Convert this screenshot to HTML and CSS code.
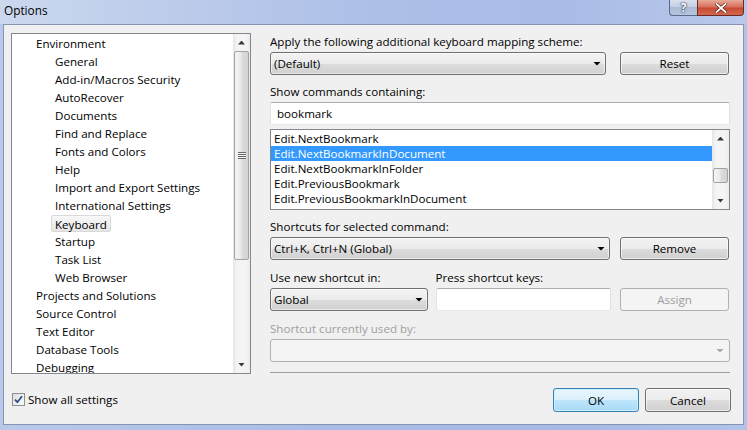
FILE: index.html
```html
<!DOCTYPE html>
<html>
<head>
<meta charset="utf-8">
<title>Options</title>
<link rel="stylesheet" href="styles.css">
</head>
<body>
<div class="window">
  <div class="titlebar">
    <span class="title">Options</span>
    <div class="caption-btns">
      <div class="cbtn help">?</div>
      <div class="cbtn close">
        <svg width="12" height="10" viewBox="0 0 12 10"><path d="M1.5 1 L10.5 9 M10.5 1 L1.5 9" stroke="#5a1a10" stroke-width="3.2" stroke-linecap="square"/><path d="M1.5 1 L10.5 9 M10.5 1 L1.5 9" stroke="#ffffff" stroke-width="1.8" stroke-linecap="square"/></svg>
      </div>
    </div>
  </div>
  <div class="client">
    <div class="left">
      <div class="tree">
        <ul class="tree-items">
          <li>Environment</li>
          <li class="child">General</li>
          <li class="child">Add-in/Macros Security</li>
          <li class="child">AutoRecover</li>
          <li class="child">Documents</li>
          <li class="child">Find and Replace</li>
          <li class="child">Fonts and Colors</li>
          <li class="child">Help</li>
          <li class="child">Import and Export Settings</li>
          <li class="child">International Settings</li>
          <li class="child sel-row"><span class="tree-sel">Keyboard</span></li>
          <li class="child">Startup</li>
          <li class="child">Task List</li>
          <li class="child">Web Browser</li>
          <li>Projects and Solutions</li>
          <li>Source Control</li>
          <li>Text Editor</li>
          <li>Database Tools</li>
          <li>Debugging</li>
        </ul>
        <div class="vscroll">
          <div class="sb-btn"><span class="arr-up"></span></div>
          <div class="sb-thumb tree-thumb"><span class="grip"></span></div>
          <div class="sb-track"></div>
          <div class="sb-btn"><span class="arr-down"></span></div>
        </div>
      </div>
      <div class="check">
        <span class="checkbox">
          <svg width="9" height="9" viewBox="0 0 9 9"><path d="M1 4.6 L3.4 7.2 L8 1.2" fill="none" stroke="#2a4a8a" stroke-width="1.7"/></svg>
        </span>
        <span>Show all settings</span>
      </div>
    </div>

    <div class="right">
      <div class="label">Apply the following additional keyboard mapping scheme:</div>
      <div class="row">
        <div class="combo w-scheme"><span>(Default)</span><span class="arr-down dark"></span></div>
        <div class="btn side">Reset</div>
      </div>

      <div class="label gap9">Show commands containing:</div>
      <div class="textbox search">bookmark</div>

      <div class="listbox">
        <ul class="list-items">
          <li>Edit.NextBookmark</li>
          <li class="selected">Edit.NextBookmarkInDocument</li>
          <li>Edit.NextBookmarkInFolder</li>
          <li>Edit.PreviousBookmark</li>
          <li>Edit.PreviousBookmarkInDocument</li>
        </ul>
        <div class="vscroll">
          <div class="sb-btn"><span class="arr-up"></span></div>
          <div class="sb-space"></div>
          <div class="sb-thumb list-thumb"></div>
          <div class="sb-track"></div>
          <div class="sb-btn"><span class="arr-down"></span></div>
        </div>
      </div>

      <div class="label gap9">Shortcuts for selected command:</div>
      <div class="row">
        <div class="combo w-shortcuts"><span>Ctrl+K, Ctrl+N (Global)</span><span class="arr-down dark"></span></div>
        <div class="btn side">Remove</div>
      </div>

      <div class="row gap10">
        <div class="field f-scope">
          <div class="label">Use new shortcut in:</div>
          <div class="combo"><span>Global</span><span class="arr-down dark"></span></div>
        </div>
        <div class="field f-keys">
          <div class="label">Press shortcut keys:</div>
          <div class="textbox"></div>
        </div>
        <div class="field f-assign">
          <div class="label"></div>
          <div class="btn disabled">Assign</div>
        </div>
      </div>

      <div class="label gap10 muted">Shortcut currently used by:</div>
      <div class="combo disabled-combo"><span></span><span class="arr-down grey"></span></div>

      <div class="separator"></div>

      <div class="footer">
        <div class="btn default">OK</div>
        <div class="btn">Cancel</div>
      </div>
    </div>
  </div>
</div>
</body>
</html>
```

FILE: styles.css
```css
* { box-sizing: border-box; }

html, body {
  margin: 0;
  padding: 0;
}

body {
  font-family: "Open Sans", "Noto Sans", sans-serif;
  font-size: 11.6px;
  color: #000;
  background: #fff;
}

.window {
  width: 747px;
  height: 430px;
  display: flex;
  flex-direction: column;
  background: linear-gradient(to right, #b9c9ea 0%, #aabce7 45%, #a6b8e6 75%, #b2c3e9 100%);
}

.titlebar {
  height: 24px;
  display: flex;
  justify-content: space-between;
  align-items: flex-start;
  padding: 0 3px 0 4px;
  background: linear-gradient(to right, #cbd8ee 0%, #bfcdeb 20%, #adbfe8 50%, #a9bbe7 75%, #b9c8ea 100%);
}

.title {
  line-height: 21px;
  font-size: 11.8px;
  color: #000;
}

.caption-btns {
  display: flex;
}

.cbtn {
  height: 16px;
  display: flex;
  align-items: center;
  justify-content: center;
  border: 1px solid #5a6a8c;
  border-top: 0;
}

.help {
  width: 28px;
  border-right: 0;
  border-radius: 0 0 0 4px;
  background: linear-gradient(#d9e0ee, #c3cde2 50%, #adbad5 50%, #b7c4de);
  color: #fff;
  font-weight: bold;
  font-size: 12px;
  line-height: 14px;
  text-shadow: 0 0 1px #2d3a55, 0 0 1px #2d3a55, 0 0 2px #2d3a55;
}

.close {
  width: 47px;
  border-color: #6b2a22;
  border-radius: 0 0 4px 0;
  background: linear-gradient(#e9aa9b, #d8705c 45%, #c74a33 55%, #d6684f);
}

.client {
  flex: 1;
  margin: 0 3px 5px;
  background: #f0f0f0;
  border: 1px solid #8795b3;
  display: flex;
}

/* ---------- left ---------- */

.left {
  width: 247px;
  padding: 8px 0 0 7px;
  display: flex;
  flex-direction: column;
}

.tree {
  width: 240px;
  height: 341px;
  border: 1px solid #828790;
  background: #fff;
  display: flex;
  overflow: hidden;
}

.tree-items {
  flex: 1;
  list-style: none;
  margin: 0;
  padding: 0;
}

.tree-items li {
  height: 18px;
  line-height: 16px;
  padding-top: 2px;
  padding-left: 24px;
  white-space: nowrap;
}

.tree-items li.child {
  padding-left: 43px;
}

.tree-items li.sel-row {
  padding-top: 1px;
}

.tree-sel {
  display: inline-block;
  vertical-align: top;
  height: 17px;
  line-height: 17px;
  margin-left: -4px;
  padding: 0 3px;
  border: 1px solid #d9d9d9;
  border-radius: 2px;
  background: linear-gradient(#f8f8f8, #e6e6e6);
}

.vscroll {
  width: 17px;
  display: flex;
  flex-direction: column;
  background: linear-gradient(to right, #e6e6e6, #f4f4f4 25%, #f4f4f4 75%, #ececec);
}

.sb-btn {
  height: 17px;
  flex: none;
  display: flex;
  align-items: center;
  justify-content: center;
}

.sb-track {
  flex: 1;
}

.sb-thumb {
  flex: none;
  margin: 0 1px;
  border: 1px solid #a3a3a3;
  border-radius: 2px;
  background: linear-gradient(to right, #f4f4f4, #eaeaea 45%, #dcdcdc 55%, #d3d3d3);
  display: flex;
  align-items: center;
  justify-content: center;
}

.tree-thumb {
  height: 209px;
}

.list-thumb {
  height: 15px;
}

.sb-space {
  height: 21px;
  flex: none;
}

.grip {
  width: 8px;
  height: 7px;
  background: repeating-linear-gradient(#6a6a6a 0 1px, #f2f2f2 1px 2px);
}

.arr-up,
.arr-down {
  display: block;
  width: 7px;
  height: 4px;
  background: #3a3a3a;
}

.arr-up {
  clip-path: polygon(50% 0, 100% 100%, 0 100%);
}

.arr-down {
  clip-path: polygon(0 0, 100% 0, 50% 100%);
}

.arr-down.dark {
  width: 8px;
  background: #000;
}

.arr-down.grey {
  width: 8px;
  background: #a8a8a8;
}

.check {
  margin-top: 18px;
  display: flex;
  align-items: center;
  gap: 3px;
  height: 15px;
  line-height: 15px;
  padding-left: 1px;
}

.checkbox {
  width: 13px;
  height: 13px;
  border: 1px solid #8e8f8f;
  background: linear-gradient(135deg, #dcdcdc, #fdfdfd);
  display: flex;
  align-items: center;
  justify-content: center;
}

/* ---------- right ---------- */

.right {
  width: 460px;
  margin-left: 19px;
  padding-top: 9px;
  display: flex;
  flex-direction: column;
}

.label {
  height: 15px;
  line-height: 15px;
  margin-bottom: 3px;
  white-space: nowrap;
}

.label.muted {
  color: #a0a0a0;
}

.gap9 {
  margin-top: 9px;
}

.gap10 {
  margin-top: 10px;
}

.row {
  display: flex;
  justify-content: space-between;
  align-items: flex-end;
}

.combo {
  height: 23px;
  border: 1px solid #707070;
  border-radius: 3px;
  background: linear-gradient(#f3f3f3, #ebebeb 50%, #dddddd 50%, #d0d0d0);
  box-shadow: inset 0 0 0 1px rgba(255, 255, 255, 0.55);
  display: flex;
  align-items: center;
  justify-content: space-between;
  padding: 0 4px 0 3px;
  line-height: 15px;
  white-space: nowrap;
}

.w-scheme {
  width: 336px;
}

.w-shortcuts {
  width: 340px;
}

.disabled-combo {
  width: 460px;
  border-color: #adb2b5;
  background: #f4f4f4;
  box-shadow: none;
  padding-right: 5px;
}

.btn {
  width: 109px;
  height: 23px;
  border: 1px solid #707070;
  border-radius: 3px;
  background: linear-gradient(#f2f2f2, #ebebeb 50%, #dddddd 50%, #cfcfcf);
  box-shadow: inset 0 0 0 1px rgba(255, 255, 255, 0.6);
  display: flex;
  align-items: center;
  justify-content: center;
  line-height: 15px;
}

.btn.side {
  margin-right: 1px;
}

.btn.disabled {
  border-color: #adb2b5;
  background: #f4f4f4;
  box-shadow: none;
  color: #9d9d9d;
}

.btn.default {
  border-color: #3c7fb1;
  background: linear-gradient(#eaf6fd, #d9f0fc 50%, #bee6fd 50%, #a7d9f5);
  box-shadow: inset 0 0 0 1px #c9f0ff;
}

.textbox {
  height: 23px;
  border: 1px solid;
  border-color: #abadb3 #dbdfe6 #e3e9ef #e2e3ea;
  border-radius: 2px;
  background: #fff;
  line-height: 21px;
  padding-left: 6px;
}

.search {
  width: 460px;
}

.listbox {
  margin-top: 4px;
  height: 81px;
  border: 1px solid #828790;
  background: #fff;
  display: flex;
  overflow: hidden;
}

.list-items {
  flex: 1;
  list-style: none;
  margin: 0;
  padding: 1px 0 0;
}

.list-items li {
  height: 15px;
  line-height: 15px;
  padding-left: 3px;
  white-space: nowrap;
}

.list-items li.selected {
  background: #3399ff;
  color: #fff;
}

.field {
  display: flex;
  flex-direction: column;
}

.f-scope {
  width: 158px;
}

.f-keys {
  width: 175px;
  margin-left: 7px;
}

.f-assign {
  width: 109px;
  margin-left: 9px;
  margin-right: 1px;
}

.separator {
  margin-top: 10px;
  height: 1px;
  background: #a0a0a0;
}

.footer {
  margin-top: 15px;
  margin-right: -1px;
  display: flex;
  justify-content: flex-end;
  gap: 6px;
}

.footer .btn {
  width: 86px;
  height: 24px;
}
```
